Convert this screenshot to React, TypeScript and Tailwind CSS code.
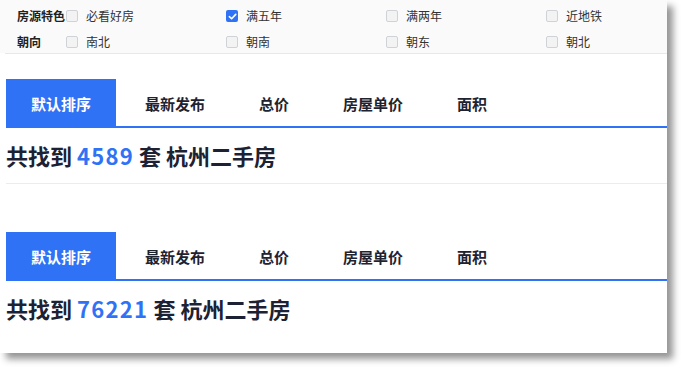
const TABS = ["默认排序", "最新发布", "总价", "房屋单价", "面积"];

const FILTERS = [
  {
    label: "房源特色",
    options: [
      { text: "必看好房", checked: false },
      { text: "满五年", checked: true },
      { text: "满两年", checked: false },
      { text: "近地铁", checked: false },
    ],
  },
  {
    label: "朝向",
    options: [
      { text: "南北", checked: false },
      { text: "朝南", checked: false },
      { text: "朝东", checked: false },
      { text: "朝北", checked: false },
    ],
  },
];

function Checkbox({ checked }: { checked: boolean }) {
  if (checked) {
    return (
      <span className="w-[12px] h-[12px] rounded-[2px] bg-[#3072f6] flex items-center justify-center shrink-0">
        <svg width="9" height="9" viewBox="0 0 10 10" fill="none">
          <path d="M1.5 5.2 L4 7.5 L8.6 2.6" stroke="white" strokeWidth="1.8" strokeLinecap="round" strokeLinejoin="round" />
        </svg>
      </span>
    );
  }
  return <span className="w-[12px] h-[12px] rounded-[2px] border border-[#cfd3d8] bg-[#f3f3f3] shrink-0" />;
}

function SortBlock({ count }: { count: string }) {
  return (
    <div>
      <div className="flex gap-[4px] border-b-2 border-[#3072f6]">
        {TABS.map((t, i) => (
          <div
            key={t}
            className={`h-[47px] px-[25px] flex items-center pt-[3px] text-[15px] font-bold ${
              i === 0 ? "bg-[#3072f6] text-white" : "text-[#1f2330]"
            }`}
          >
            {t}
          </div>
        ))}
      </div>
      <h2 className="mt-[12px] text-[22px] leading-[30px] font-bold text-[#1c2233] whitespace-nowrap">
        共找到 <span className="text-[#3072f6] tracking-[1.3px]">{count}</span> 套 杭州二手房
      </h2>
    </div>
  );
}

export default function App() {
  return (
    <div
      className="min-h-screen bg-white"
      style={{ fontFamily: '"Noto Sans CJK SC", "Noto Sans", sans-serif' }}
    >
      <div className="w-[667px] h-[353px] bg-white shadow-[6px_6px_7px_rgba(0,0,0,0.42)]">
        {/* Filters */}
        <div className="bg-[#fafafa] pt-[10px] pb-[5px] flex flex-col gap-[14px] overflow-hidden">
          {FILTERS.map((row) => (
            <div key={row.label} className="flex items-center h-[12px] pl-[17px]">
              <span className="w-[49px] shrink-0 whitespace-nowrap text-[12px] font-bold text-[#222] leading-none">
                {row.label}
              </span>
              {row.options.map((o) => (
                <div key={o.text} className="w-[160px] shrink-0 flex items-center gap-[8px]">
                  <Checkbox checked={o.checked} />
                  <span className="text-[12px] text-[#333] leading-none whitespace-nowrap">{o.text}</span>
                </div>
              ))}
            </div>
          ))}
        </div>
        <div className="ml-[5px] border-t border-[#e8e8e8]" />

        <div className="pl-[6px]">
          <div className="mt-[25px]">
            <SortBlock count="4589" />
          </div>
          <div className="mt-[13px] border-t border-[#ececec]" />
          <div className="mt-[48px]">
            <SortBlock count="76221" />
          </div>
        </div>
      </div>
    </div>
  );
}
